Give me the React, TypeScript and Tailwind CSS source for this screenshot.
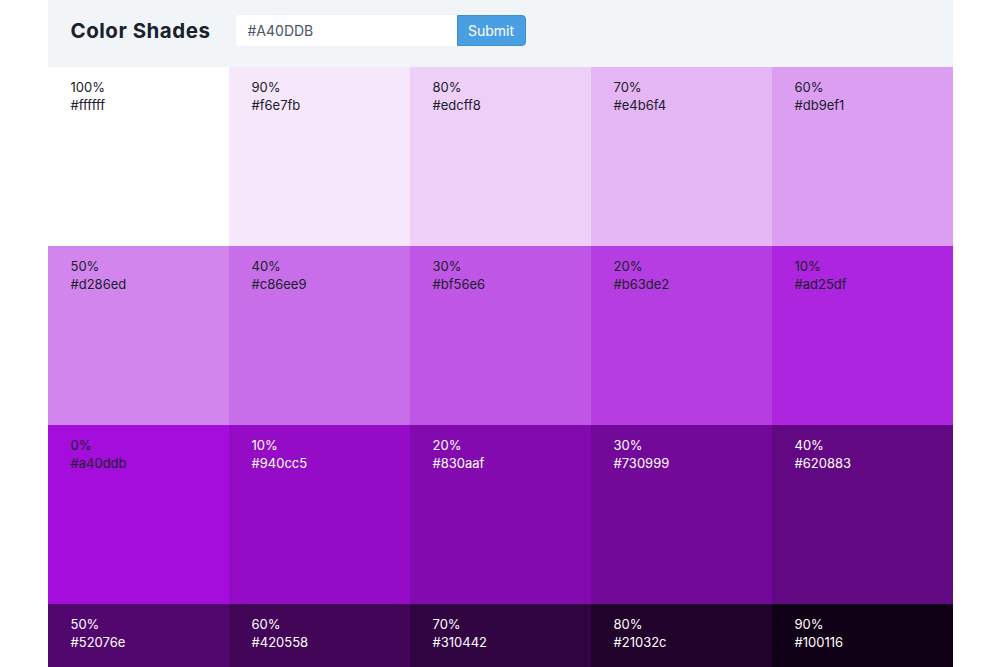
import React, { useState } from 'react';

type Shade = { label: string; hex: string; light?: boolean };

const shades: Shade[] = [
  { label: '100%', hex: '#ffffff' },
  { label: '90%', hex: '#f6e7fb' },
  { label: '80%', hex: '#edcff8' },
  { label: '70%', hex: '#e4b6f4' },
  { label: '60%', hex: '#db9ef1' },
  { label: '50%', hex: '#d286ed' },
  { label: '40%', hex: '#c86ee9' },
  { label: '30%', hex: '#bf56e6' },
  { label: '20%', hex: '#b63de2' },
  { label: '10%', hex: '#ad25df' },
  { label: '0%', hex: '#a40ddb' },
  { label: '10%', hex: '#940cc5', light: true },
  { label: '20%', hex: '#830aaf', light: true },
  { label: '30%', hex: '#730999', light: true },
  { label: '40%', hex: '#620883', light: true },
  { label: '50%', hex: '#52076e', light: true },
  { label: '60%', hex: '#420558', light: true },
  { label: '70%', hex: '#310442', light: true },
  { label: '80%', hex: '#21032c', light: true },
  { label: '90%', hex: '#100116', light: true },
];

const App: React.FC = () => {
  const [color, setColor] = useState('#A40DDB');

  return (
    <div className="min-h-screen bg-white" style={{ fontFamily: 'Inter, "Noto Sans", sans-serif' }}>
      <div className="mx-auto w-[905px]">
        {/* Header */}
        <div className="flex h-[67px] items-start bg-[#f1f5f8] px-[23px] pt-[15px]">
          <h1 className="w-[140px] text-[20.5px] font-bold leading-[31px] tracking-wide text-[#1a202c]">Color Shades</h1>
          <div className="ml-[25px] flex items-center">
            <input
              value={color}
              onChange={(e) => setColor(e.target.value)}
              className="h-[31px] w-[221px] rounded-l bg-white px-3 text-[14px] text-[#4a5568] outline-none"
            />
            <button className="h-[31px] w-[69px] rounded-r border border-[#3b8fd6] bg-[#4a9fe3] text-[14px] text-white">
              Submit
            </button>
          </div>
        </div>

        {/* Shades grid */}
        <div className="grid grid-cols-5">
          {shades.map((s, i) => (
            <div
              key={i}
              className={`h-[179px] pl-[23px] pt-[11px] text-[13px] leading-[18px] ${s.light ? 'text-white' : 'text-[#1a202c]'}`}
              style={{ backgroundColor: s.hex }}
            >
              <div>{s.label}</div>
              <div>{s.hex}</div>
            </div>
          ))}
        </div>
      </div>
    </div>
  );
};

export default App;
